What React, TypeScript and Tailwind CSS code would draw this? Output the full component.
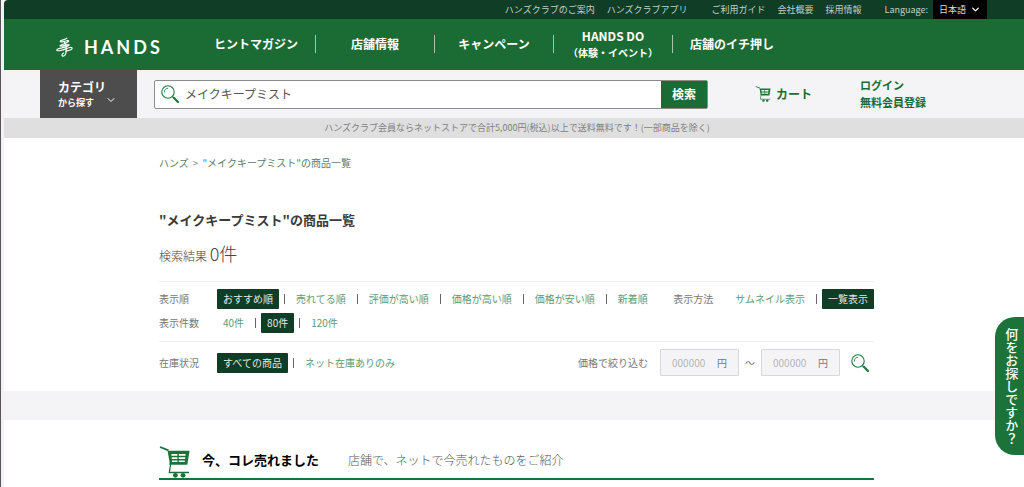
import type { ReactNode } from "react";
import clsx from "clsx";
import { ChevronDown } from "lucide-react";

const TOP_LINKS = ["ハンズクラブのご案内", "ハンズクラブアプリ"];
const GUIDE_LINKS = ["ご利用ガイド", "会社概要", "採用情報"];
const SORTS = ["おすすめ順", "売れてる順", "評価が高い順", "価格が高い順", "価格が安い順", "新着順"];
const COUNTS = ["40件", "80件", "120件"];
const LAYOUTS = ["サムネイル表示", "一覧表示"];
const STOCKS = ["すべての商品", "ネット在庫ありのみ"];

const NAV: { title: string; sub?: string }[] = [
  { title: "ヒントマガジン" },
  { title: "店舗情報" },
  { title: "キャンペーン" },
  { title: "HANDS DO", sub: "（体験・イベント）" },
  { title: "店舗のイチ押し" },
];

function SearchIcon() {
  return (
    <svg viewBox="0 0 18 18" className="size-[18px] shrink-0" fill="none" stroke="#1b7a3c" aria-hidden="true">
      <circle cx="7" cy="7" r="6.2" strokeWidth="1.1" />
      <path d="M3.4 7.4A3.7 3.7 0 0 1 7.2 3.2" strokeWidth="0.9" />
      <path d="M11.3 11.5l1.6 1.6" strokeWidth="1.2" />
      <path d="M12.8 12.8l4.2 4.2" strokeWidth="2.2" strokeLinecap="round" />
    </svg>
  );
}

function CartIcon({ className }: { className: string }) {
  return (
    <svg viewBox="0 0 31 32" className={className} fill="none" aria-hidden="true">
      <path d="M1 1l8.500 3.400" stroke="#1b7339" strokeWidth="1.800" />
      <path d="M10.500 17.500l1 1.500-1.200 7.500H30" stroke="#1b7339" strokeWidth="1.300" />
      <path d="M8.600 4.800h22L28.300 18.800H11z" fill="#1b7339" />
      <path d="M12.400 8h6v1.800h-6zM19.800 8h6.800v1.800h-6.800zM12.700 11.200h5.700V13h-5.700zM19.800 11.200h6.400V13h-6.400zM13 14.400h5.400V16H13zM19.800 14.400h6V16h-6z" fill="#fff" />
      <circle cx="16.400" cy="29.300" r="2.400" fill="#1b7339" />
      <circle cx="24" cy="29.300" r="2.400" fill="#1b7339" />
    </svg>
  );
}

function LogoMark() {
  return (
    <svg viewBox="0 0 17 20" className="h-5 w-[17px]" fill="none" stroke="#fff" strokeWidth="1.2" strokeLinecap="round" strokeLinejoin="round" aria-hidden="true">
      <path d="M10.800 1.200C8.800 2.600 5.800 3.200 4.600 3.800c-1 .8.400 1.400 2 1 2.200-.5 4.800-1.600 5.800-1.200.8.800-2 2.400-5.600 3.600C4.200 8 3.200 9 4.800 9.200c2.400.1 5.800-1.800 8-1.600 1.200.8-2.600 2.400-6.800 3.200-3 .5-5.400 1.200-5.200 2.400.5 1.200 5.400.2 9.400-1.600 3-1.200 5.900-1.600 6-.5 0 1.300-3.400 2.700-6.400 3.100" />
      <path d="M8.200 4.600c1.600 2.600 2.300 7 1.900 10.200-.3 2.600-1.500 4.300-2.900 4.300-1.700 0-1.700-2.200.5-3.100" />
    </svg>
  );
}

function Options({ items, active }: { items: string[]; active: string }) {
  return (
    <ul className="flex items-center">
      {items.map((item, i) => (
        <li key={item} className="flex items-center">
          {i > 0 && <span className="mx-[5px] h-2.5 w-px bg-[#666]" />}
          <a
            href="#"
            aria-current={item === active ? "true" : undefined}
            className={clsx(
              "rounded-[1px] px-1.5 leading-5 whitespace-nowrap",
              item === active ? "bg-[#0f3d25] text-[#e4ebe6]" : "text-[#5f9a74]",
            )}
          >
            {item}
          </a>
        </li>
      ))}
    </ul>
  );
}

function FilterLabel({ children }: { children: ReactNode }) {
  return <span className="w-[58px] shrink-0 leading-5 text-[#777]">{children}</span>;
}

function PriceBox({ label }: { label: string }) {
  return (
    <label className="flex h-[27px] w-[79px] items-center justify-between rounded-[1px] border border-[#d8d8da] bg-[#f4f4f6] px-[11px]">
      <input
        type="text"
        aria-label={label}
        placeholder="000000"
        className="w-10 bg-transparent outline-none placeholder:text-[#b4b4b8]"
      />
      <span className="text-[#777]">円</span>
    </label>
  );
}

function Header() {
  return (
    <header>
      <div className="flex h-[19px] items-center justify-end overflow-hidden rounded-tl-[4px] bg-[#0f3d25] pr-[37px] text-[9px] text-[#c3d0c8]">
        <div className="flex gap-3">
          {TOP_LINKS.map((t) => (
            <a key={t} href="#">{t}</a>
          ))}
        </div>
        <div className="ml-6 flex gap-3">
          {GUIDE_LINKS.map((t) => (
            <a key={t} href="#">{t}</a>
          ))}
        </div>
        <label htmlFor="lang" className="ml-[23px]">Language:</label>
        <div className="relative ml-[5px] h-full bg-black">
          <select id="lang" className="h-full w-[54px] appearance-none bg-transparent pl-1.5 text-[9px] text-[#ddd]">
            <option>日本語</option>
          </select>
          <ChevronDown size={11} strokeWidth={3} className="pointer-events-none absolute top-1 right-1.5 text-white" />
        </div>
      </div>

      <div className="flex h-[51px] items-center bg-[#1b6b35] text-white">
        <a href="#" className="flex w-[193px] shrink-0 items-center gap-[11px] pt-1 pl-[52px]">
          <LogoMark />
          <span className="font-[Lato] text-lg leading-5 font-bold tracking-[3px]">HANDS</span>
        </a>
        <nav className="flex items-center pb-0.5 text-xs font-bold">
          {NAV.map((n, i) => (
            <div key={n.title} className="flex items-center">
              {i > 0 && <span className="h-[18px] w-px bg-[#a4c4ae]" />}
              <a href="#" className="block w-[118px] text-center leading-[17px] whitespace-nowrap">
                {n.title}
                {n.sub && <span className="block text-[10px]">{n.sub}</span>}
              </a>
            </div>
          ))}
        </nav>
      </div>

      <div className="flex h-12 items-center bg-[#f4f4f6] pr-[98px] pl-9">
        <button type="button" className="flex h-full w-[97px] shrink-0 items-center justify-between bg-[#4d4d4d] pr-5 pl-[18px] text-left font-bold whitespace-nowrap text-white">
          <span>
            <span className="block text-xs leading-4">カテゴリ</span>
            <span className="block text-[9px] leading-[15px]">から探す</span>
          </span>
          <ChevronDown size={12} className="-ml-2 mt-3 shrink-0" />
        </button>
        <form className="ml-[17px] flex h-[29px] flex-1 rounded-[2px] border border-[#8c8c8c] bg-white">
          <label className="flex flex-1 items-center gap-1.5 pl-1.5">
            <SearchIcon />
            <input
              type="text"
              aria-label="商品を検索"
              defaultValue="メイクキープミスト"
              className="min-w-0 flex-1 text-xs text-[#555] outline-none"
            />
          </label>
          <button type="submit" className="w-[46px] bg-[#1b6b35] text-xs font-bold text-white">検索</button>
        </form>
        <a href="#" className="ml-[47px] flex items-center gap-[5px] text-xs font-bold text-[#1b6b35]">
          <CartIcon className="size-4" />
          カート
        </a>
        <div className="ml-12 flex flex-col text-[11px] leading-[17px] font-bold text-[#1b6b35]">
          <a href="#">ログイン</a>
          <a href="#">無料会員登録</a>
        </div>
      </div>

      <p className="bg-[#dfdfdf] pl-1.5 text-center text-[9px] leading-5 text-[#808080]">
        ハンズクラブ会員ならネットストアで合計5,000円(税込)以上で送料無料です！(一部商品を除く)
      </p>
    </header>
  );
}

export default function App() {
  return (
    <div className="min-h-screen border-l border-[#555] bg-[#f3f1f5] pl-[3px] font-['Noto_Sans_CJK_JP',sans-serif]">
      <div className="min-h-screen bg-white">
        <Header />

        <main>
          <section className="pt-[15px] pr-[150px] pb-[15px] pl-[155px] text-[10px]">
            <div className="flex gap-1 leading-5 text-[#5c8069]">
              <a href="#">ハンズ</a>
              <span className="text-[#888]">&gt;</span>
              <span>"メイクキープミスト"の商品一覧</span>
            </div>

            <h1 className="mt-[35px] text-[13px] leading-6 font-bold text-[#3a3a3a]">"メイクキープミスト"の商品一覧</h1>
            <p className="mt-[9px] text-xs leading-6 font-light text-[#444]">
              検索結果 <span className="text-lg leading-6">0件</span>
            </p>

            <div className="mt-[13px] flex flex-col gap-1 border-t border-[#f0f0f0] pt-[7px] pb-2">
              <div className="flex items-center">
                <FilterLabel>表示順</FilterLabel>
                <Options items={SORTS} active="おすすめ順" />
                <div className="ml-auto flex items-center gap-4">
                  <span className="leading-5 whitespace-nowrap text-[#777]">表示方法</span>
                  <Options items={LAYOUTS} active="一覧表示" />
                </div>
              </div>
              <div className="flex items-center">
                <FilterLabel>表示件数</FilterLabel>
                <Options items={COUNTS} active="80件" />
              </div>
            </div>

            <div className="flex items-center border-t border-[#f0f0f0] pt-[7px]">
              <FilterLabel>在庫状況</FilterLabel>
              <Options items={STOCKS} active="すべての商品" />
              <div className="ml-auto flex items-center">
                <span className="mr-3 leading-5 text-[#777]">価格で絞り込む</span>
                <PriceBox label="下限価格" />
                <span className="mx-1.5 text-[#777]">～</span>
                <PriceBox label="上限価格" />
                <button type="button" aria-label="価格で検索" className="mr-[5px] ml-[11px]">
                  <SearchIcon />
                </button>
              </div>
            </div>
          </section>

          <div className="h-[29px] bg-[#f4f4f6]" />

          <section className="pt-[26px] pr-[150px] pl-[155px]">
            <div className="flex items-start border-b-2 border-[#1b7339]">
              <CartIcon className="h-8 w-[31px]" />
              <h2 className="ml-3 pt-0.5 text-[13px] leading-6 font-bold text-black">今、コレ売れました</h2>
              <p className="ml-[29px] pt-0.5 text-xs leading-6 font-light text-[#555]">店舗で、ネットで今売れたものをご紹介</p>
            </div>
          </section>
        </main>
      </div>

      <button
        type="button"
        className="fixed top-[317px] right-0 h-[138px] w-[29px] rounded-l-[20px] bg-[#1c7339] pl-1 text-[13px] font-medium text-white [writing-mode:vertical-rl]"
      >
        何をお探しですか？
      </button>
    </div>
  );
}
